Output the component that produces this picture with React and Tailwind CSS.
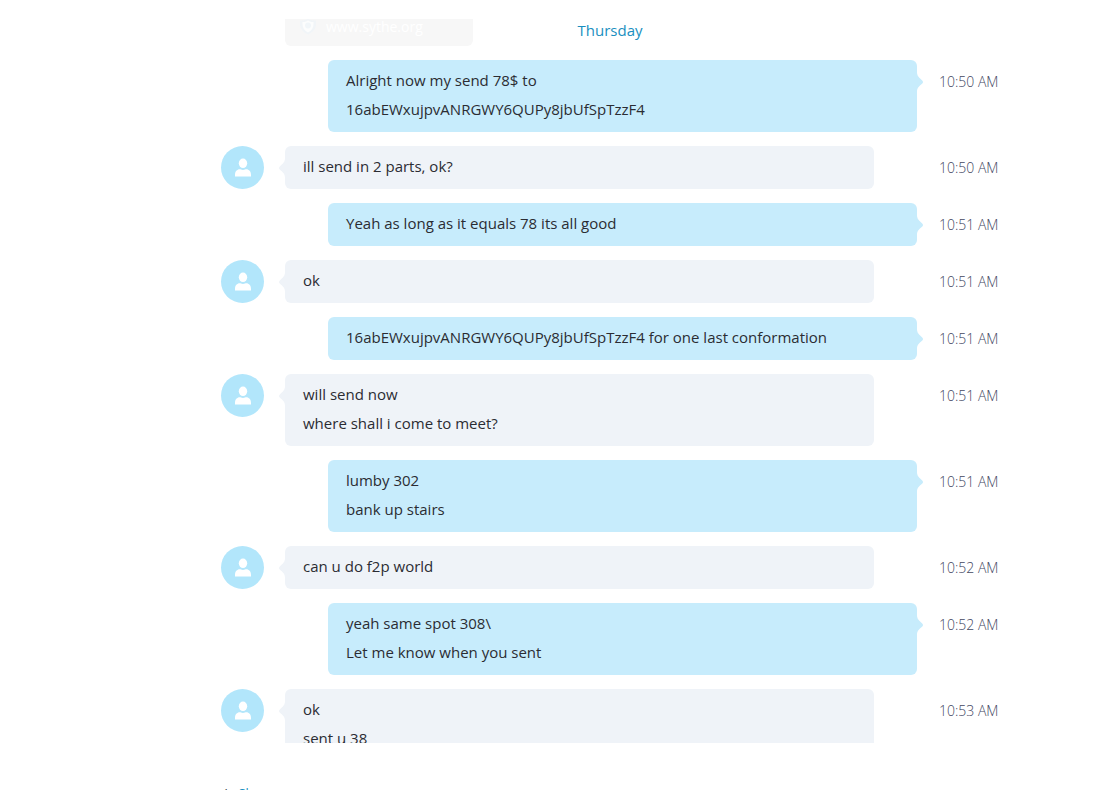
import React from 'react'

const messages = [
  { own: true, time: '10:50 AM', lines: ['Alright now my send 78$ to', '16abEWxujpvANRGWY6QUPy8jbUfSpTzzF4'] },
  { own: false, time: '10:50 AM', lines: ['ill send in 2 parts, ok?'] },
  { own: true, time: '10:51 AM', lines: ['Yeah as long as it equals 78 its all good'] },
  { own: false, time: '10:51 AM', lines: ['ok'] },
  { own: true, time: '10:51 AM', lines: ['16abEWxujpvANRGWY6QUPy8jbUfSpTzzF4 for one last conformation'] },
  { own: false, time: '10:51 AM', lines: ['will send now', 'where shall i come to meet?'] },
  { own: true, time: '10:51 AM', lines: ['lumby 302', 'bank up stairs'] },
  { own: false, time: '10:52 AM', lines: ['can u do f2p world'] },
  { own: true, time: '10:52 AM', lines: ['yeah same spot 308\\', 'Let me know when you sent'] },
  { own: false, time: '10:53 AM', lines: ['ok', 'sent u 38'] },
]

const Avatar = () => (
  <div className="flex h-[43px] w-[43px] items-center justify-center rounded-full bg-[#b2e6fb]">
    <svg className="h-5 w-4" viewBox="0 0 16 20" fill="white" aria-hidden="true">
      <ellipse cx="8" cy="5.3" rx="4.2" ry="4.8" />
      <path d="M0 18.500V17c0-3.500 2-5.700 4.700-5.700 1 0 1.600.6 3.300.6s2.300-.6 3.300-.6C14 11.300 16 13.500 16 17v1.500z" />
    </svg>
  </div>
)

const Message = ({ own, time, lines }) => (
  <li className="flex">
    <div className="mr-[21px] w-[43px] shrink-0">{!own && <Avatar />}</div>
    <div className="min-w-0 flex-1">
      <div className={own ? 'relative ml-[43px] rounded-md bg-[#c7ecfc] px-[18px] pt-[6px] pb-2' : 'relative mr-[43px] rounded-md bg-[#eff3f8] px-[18px] pt-[6px] pb-2'}>
        {/* Bubble tail */}
        <svg
          className={own ? 'absolute top-3 left-full h-5 w-[6px]' : 'absolute top-3 right-full h-5 w-[6px] -scale-x-100'}
          viewBox="0 0 6 20"
          fill={own ? '#c7ecfc' : '#eff3f8'}
          aria-hidden="true"
        >
          <path d="M0 0C0 4 2 5.500 5 8.200Q7 10 5 11.800C2 14.500 0 16 0 20z" />
        </svg>
        {lines.map((line) => (
          <p key={line} className="text-[15px] leading-[29px] text-[#2b2c33]">{line}</p>
        ))}
      </div>
    </div>
    <time className="ml-[22px] w-[60px] shrink-0 whitespace-nowrap pt-[7px] text-[14px] leading-[29px] font-light text-[#43475f]">{time}</time>
  </li>
)

const App = () => {
  return (
    <main className="h-screen overflow-hidden bg-white pt-[19px] font-['Open_Sans',sans-serif]">
      {/* Conversation */}
      <section className="relative h-[724px] overflow-hidden pl-[221px] pr-[95px]">
        <h2 className="pb-[18px] text-center text-[15px] leading-[23px] text-[#1a8fc0]">Thursday</h2>
        <ul className="flex flex-col gap-[14px]">
          {messages.map((message, index) => (
            <Message key={index} {...message} />
          ))}
        </ul>

        {/* Watermark */}
        <div className="absolute top-0 left-[285px] flex h-[27px] w-[188px] gap-2 overflow-hidden rounded-b-md bg-[#f7f7f7] pl-[15px] text-[14px] leading-4 text-white">
          <svg className="h-4 w-[18px]" viewBox="0 0 18 16" aria-hidden="true">
            <path d="M0 1.500C3 1.500 5 1 8 0c3 1 5 1.500 8 1.500V5c0 5-3 8-8 10.500C3 13 0 10 0 5z" fill="#f1f5f8" />
            <path d="M2.500 3C5 3 6 2.500 8 1.500c2 1 3 1.500 5.500 1.500v2c0 4-2 6.500-5.500 8.500C4.500 11.500 2.500 9 2.500 5z" fill="#fcfdfd" />
            <circle cx="8" cy="6.500" r="3" fill="#f1f6f9" />
          </svg>
          <span>www.sythe.org</span>
        </div>
      </section>

      <footer className="pt-10 pl-[218px] text-[13px] leading-5 text-[#2b2c33]">
        via <a href="#skype" className="text-[#1a8fc0]">Skype</a>
      </footer>
    </main>
  )
}

export default App
